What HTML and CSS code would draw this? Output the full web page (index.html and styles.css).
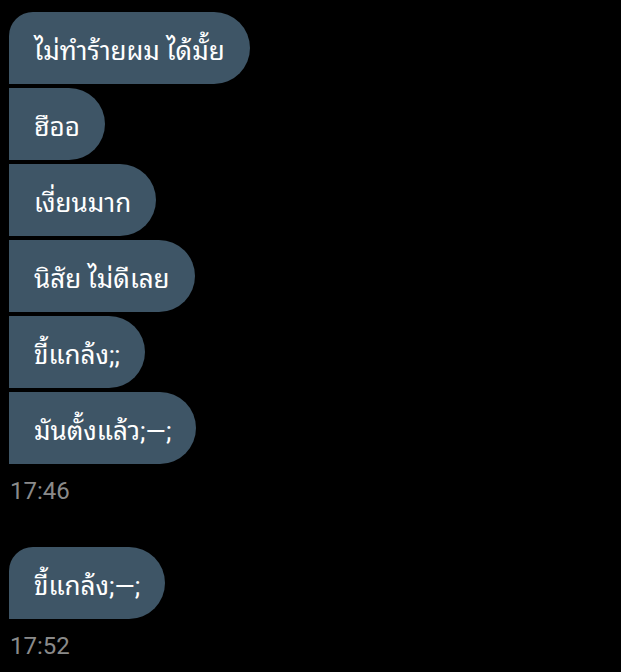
FILE: index.html
```html
<!DOCTYPE html>
<html lang="th">
<head>
<meta charset="utf-8">
<link rel="stylesheet" href="styles.css">
</head>
<body>
<div class="chat">
  <div class="group">
    <div class="bubble first">ไม่ทำร้ายผม ได้มั้ย</div>
    <div class="bubble">ฮืออ</div>
    <div class="bubble">เงี่ยนมาก</div>
    <div class="bubble">นิสัย ไม่ดีเลย</div>
    <div class="bubble">ขี้แกล้ง;;</div>
    <div class="bubble">มันตั้งแล้ว;—;</div>
  </div>
  <div class="time">17:46</div>
  <div class="group second">
    <div class="bubble first">ขี้แกล้ง;—;</div>
  </div>
  <div class="time">17:52</div>
</div>
</body>
</html>
```
FILE: styles.css
```css
html, body {
  margin: 0;
  padding: 0;
  background: #000;
}
body {
  width: 621px;
  height: 672px;
  overflow: hidden;
}
.chat {
  padding: 12px 0 0 9px;
  display: flex;
  flex-direction: column;
  align-items: flex-start;
}
.group {
  display: flex;
  flex-direction: column;
  align-items: flex-start;
  gap: 4px;
}
.group.second {
  margin-top: 42px;
}
.bubble {
  box-sizing: border-box;
  height: 72px;
  display: flex;
  align-items: center;
  padding: 0 25px 0 25px;
  background: #3e5566;
  color: #fff;
  font-family: Roboto, "Noto Sans Thai Looped", "Noto Sans Thai", "Noto Sans", sans-serif;
  font-size: 26px;
  border-radius: 0 36px 36px 0;
}
.bubble.first {
  border-top-left-radius: 24px;
}
.time {
  font-family: Roboto, "Liberation Sans", sans-serif;
  font-size: 24px;
  color: #8a8a8a;
  line-height: 28px;
  margin-top: 13px;
  padding-left: 1px;
}
```
